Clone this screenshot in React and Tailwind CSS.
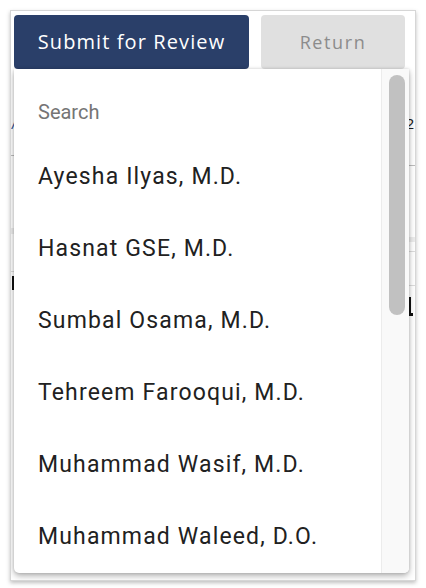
import React from "react";

const names = [
  "Ayesha Ilyas, M.D.",
  "Hasnat GSE, M.D.",
  "Sumbal Osama, M.D.",
  "Tehreem Farooqui, M.D.",
  "Muhammad Wasif, M.D.",
  "Muhammad Waleed, D.O.",
];

export default function App() {
  return (
    <div className="w-[426px] h-[588px] bg-white pt-[10px] pl-[10px]">
      <div className="relative w-[406px] h-[571px] bg-white border border-[#d6d6d6] shadow-[0_2px_4px_rgba(0,0,0,0.25)] overflow-hidden">
        {/* toolbar */}
        <div className="flex gap-[12px] pl-[3px] pt-[4px]">
          <button className="w-[235px] h-[54px] rounded-[4px] bg-[#2a3f69] text-white text-[20px] font-medium tracking-[1.1px] flex items-center justify-center" style={{ fontFamily: '"Open Sans", sans-serif' }}>
            Submit for Review
          </button>
          <button className="w-[144px] h-[54px] rounded-[4px] bg-[#e0e0e0] text-[#8c8c8c] text-[18px] font-medium tracking-[1.6px] flex items-center justify-center" style={{ fontFamily: '"Open Sans", sans-serif' }}>
            Return
          </button>
        </div>

        {/* underlying table (partially hidden) */}
        <div className="grid grid-cols-2" style={{ fontFamily: '"Liberation Sans", sans-serif' }}>
          <div className="flex flex-col">
            <div className="h-[41px]" />
            <div className="h-[46px] border-b border-[#bdbdbd] pl-[1px] text-[#2f5597] italic text-[16px] leading-[20px] pt-[4px]">/</div>
            <div className="h-[78px] border-b-[6px] border-[#ececec]" />
            <div className="h-[38px] border-b border-[#dcdcdc]" />
            <div className="h-[24px] pl-[1px] pt-[4px]">
              <div className="w-[3px] h-[14px] border-l-2 border-b-2 border-[#111]" />
            </div>
          </div>
          <div className="flex flex-col items-end">
            <div className="h-[40px]" />
            <div className="w-full h-[57px] border-b border-[#bdbdbd] flex justify-end pr-[1px] pt-[7px] text-[#222] text-[15px] leading-[16px]">2</div>
            <div className="w-full h-[76px] border-b-[5px] border-[#ececec]" />
            <div className="w-full h-[10px] border-b border-[#dcdcdc]" />
            <div className="w-full h-[34px] border-b border-[#dcdcdc]" />
            <div className="w-full flex justify-end pr-[2px] pt-[11px]">
              <div className="w-[4px] h-[19px] border-l-2 border-b-[3px] border-[#111]" />
            </div>
          </div>
        </div>

        {/* dropdown overlay */}
        <div className="absolute left-[3px] top-[58px] w-[395px] h-[504px] bg-white rounded-b-[5px] shadow-[0_3px_6px_rgba(0,0,0,0.3),0_0_3px_rgba(0,0,0,0.15)] flex overflow-hidden">
          <div className="flex-1 flex flex-col" style={{ fontFamily: 'Roboto, sans-serif' }}>
            <div className="h-[72px] flex items-center pl-[24px] pt-[13px] text-[20px] text-[#757575]">Search</div>
            {names.map((n) => (
              <div key={n} className="h-[72px] flex items-center pl-[24px] text-[23px] tracking-[1.15px] text-[#212121] shrink-0">
                {n}
              </div>
            ))}
          </div>
          <div className="w-[28px] h-full bg-[#f9f9f9] border-l border-[#ececec] pt-[6px] pl-[7px]">
            <div className="w-[16px] h-[240px] rounded-full bg-[#c1c1c1]" />
          </div>
        </div>
      </div>
    </div>
  );
}
